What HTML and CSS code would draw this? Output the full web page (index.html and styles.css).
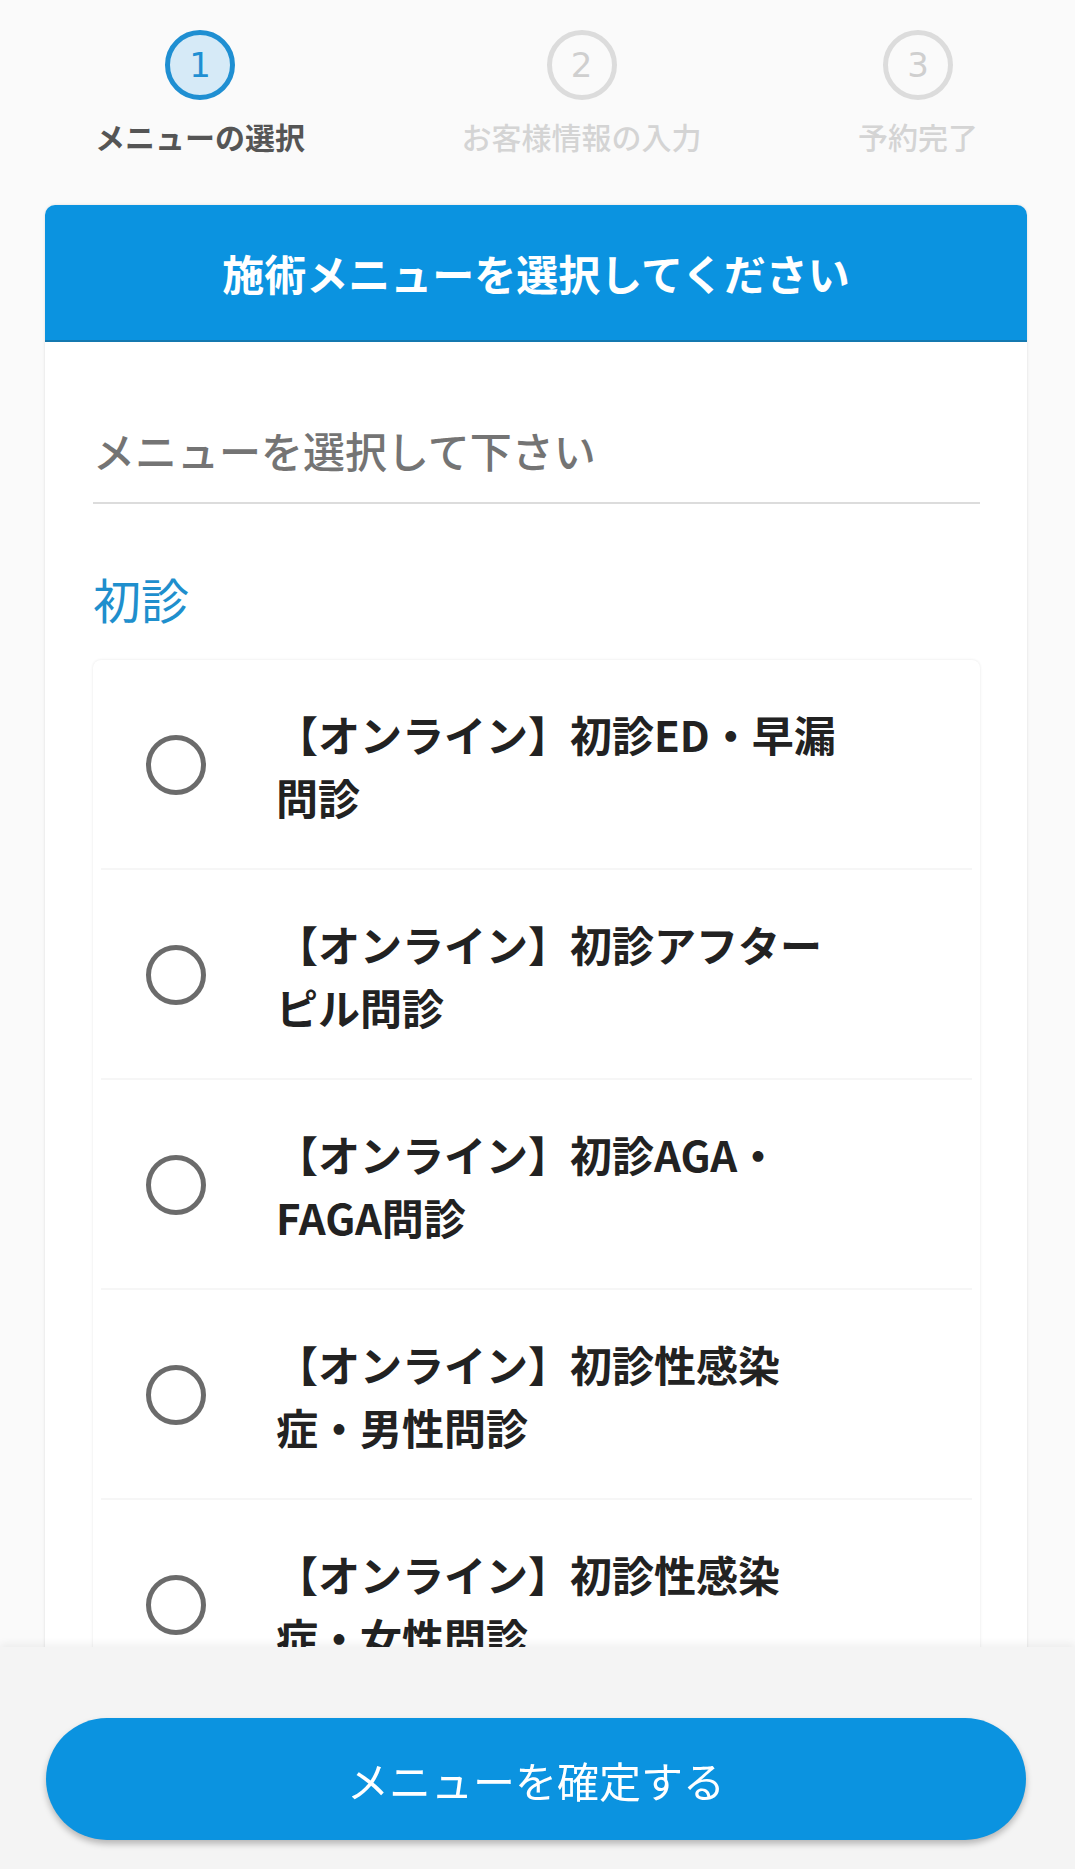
FILE: index.html
```html
<!DOCTYPE html>
<html lang="ja">
<head>
<meta charset="utf-8">
<title>メニューの選択</title>
<link rel="stylesheet" href="styles.css">
</head>
<body>
<div class="steps">
  <div class="step active">
    <div class="step-circle">1</div>
    <div class="step-label">メニューの選択</div>
  </div>
  <div class="step">
    <div class="step-circle">2</div>
    <div class="step-label">お客様情報の入力</div>
  </div>
  <div class="step">
    <div class="step-circle">3</div>
    <div class="step-label">予約完了</div>
  </div>
</div>

<div class="card">
  <div class="card-header">施術メニューを選択してください</div>
  <div class="card-body">
    <div class="select">メニューを選択して下さい</div>
    <div class="category">初診</div>
    <div class="list">
      <div class="item"><span class="radio"></span><span class="item-text">【オンライン】初診ED・早漏問診</span></div>
      <div class="item"><span class="radio"></span><span class="item-text">【オンライン】初診アフターピル問診</span></div>
      <div class="item"><span class="radio"></span><span class="item-text">【オンライン】初診AGA・FAGA問診</span></div>
      <div class="item"><span class="radio"></span><span class="item-text">【オンライン】初診性感染症・男性問診</span></div>
      <div class="item"><span class="radio"></span><span class="item-text">【オンライン】初診性感染症・女性問診</span></div>
    </div>
  </div>
</div>

<div class="bottom-bar">
  <button class="confirm">メニューを確定する</button>
</div>
</body>
</html>
```

FILE: styles.css
```css
* { box-sizing: border-box; }

html, body {
  margin: 0;
  padding: 0;
}

body {
  background: #fafafa;
  font-family: "Noto Sans CJK JP", "Noto Sans", sans-serif;
  color: #222;
  padding-bottom: 260px;
}

.steps {
  display: flex;
  justify-content: space-between;
  padding: 30px 97px 0 95px;
}

.step {
  display: flex;
  flex-direction: column;
  align-items: center;
}

.step-circle {
  width: 70px;
  height: 70px;
  border-radius: 50%;
  border: 5px solid #dcdcdc;
  color: #cfcfcf;
  font-family: "DejaVu Sans", sans-serif;
  font-size: 34px;
  line-height: 60px;
  text-align: center;
}

.step-label {
  margin-top: 16px;
  font-size: 30px;
  line-height: 40px;
  font-weight: 500;
  color: #d4d4d4;
  white-space: nowrap;
}

.step.active .step-circle {
  border-color: #1f8fd2;
  background: #d6eaf7;
  color: #1f8fd2;
}

.step.active .step-label {
  color: #555;
  font-weight: 700;
}

.card {
  margin: 49px 48px 0 45px;
  background: #fff;
  border-radius: 10px 10px 0 0;
  box-shadow: 0 0 3px rgba(0, 0, 0, 0.12);
}

.card-header {
  height: 137px;
  background: #0b93e0;
  border-bottom: 2px solid #1479b0;
  border-radius: 10px 10px 0 0;
  color: #fff;
  font-size: 42px;
  font-weight: 700;
  display: flex;
  align-items: center;
  justify-content: center;
}

.card-body {
  padding: 0 47px 40px 48px;
}

.select {
  margin-top: 80px;
  font-size: 42px;
  line-height: 56px;
  font-weight: 500;
  color: #747474;
  padding-bottom: 24px;
  border-bottom: 2px solid #dcdcdc;
}

.category {
  margin-top: 62px;
  font-size: 48px;
  line-height: 64px;
  color: #1f8fcd;
}

.list {
  margin-top: 30px;
  background: #fff;
  border-radius: 8px;
  box-shadow: 0 0 3px rgba(0, 0, 0, 0.1);
}

.item {
  position: relative;
  display: flex;
  align-items: center;
  padding: 42px 0 42px 53px;
}

.item::after {
  content: "";
  position: absolute;
  left: 8px;
  right: 8px;
  bottom: 0;
  height: 2px;
  background: #f6f6f6;
}

.radio {
  flex: none;
  width: 60px;
  height: 60px;
  border-radius: 50%;
  border: 5px solid #6b6b6b;
}

.item-text {
  margin-left: 70px;
  width: 566px;
  font-size: 42px;
  line-height: 63px;
  font-weight: 700;
  color: #222;
}

.bottom-bar {
  position: fixed;
  left: 0;
  right: 0;
  bottom: 0;
  height: 222px;
  background: #f4f4f4;
  box-shadow: 0 -3px 8px rgba(0, 0, 0, 0.06);
  padding: 71px 49px 0 46px;
}

.confirm {
  display: block;
  width: 100%;
  height: 122px;
  border: none;
  border-radius: 61px;
  background: #0b93e0;
  color: #fff;
  font-family: "Noto Sans CJK JP", "Noto Sans", sans-serif;
  font-size: 42px;
  font-weight: 400;
  box-shadow: 0 4px 6px rgba(0, 0, 0, 0.25);
}
```
